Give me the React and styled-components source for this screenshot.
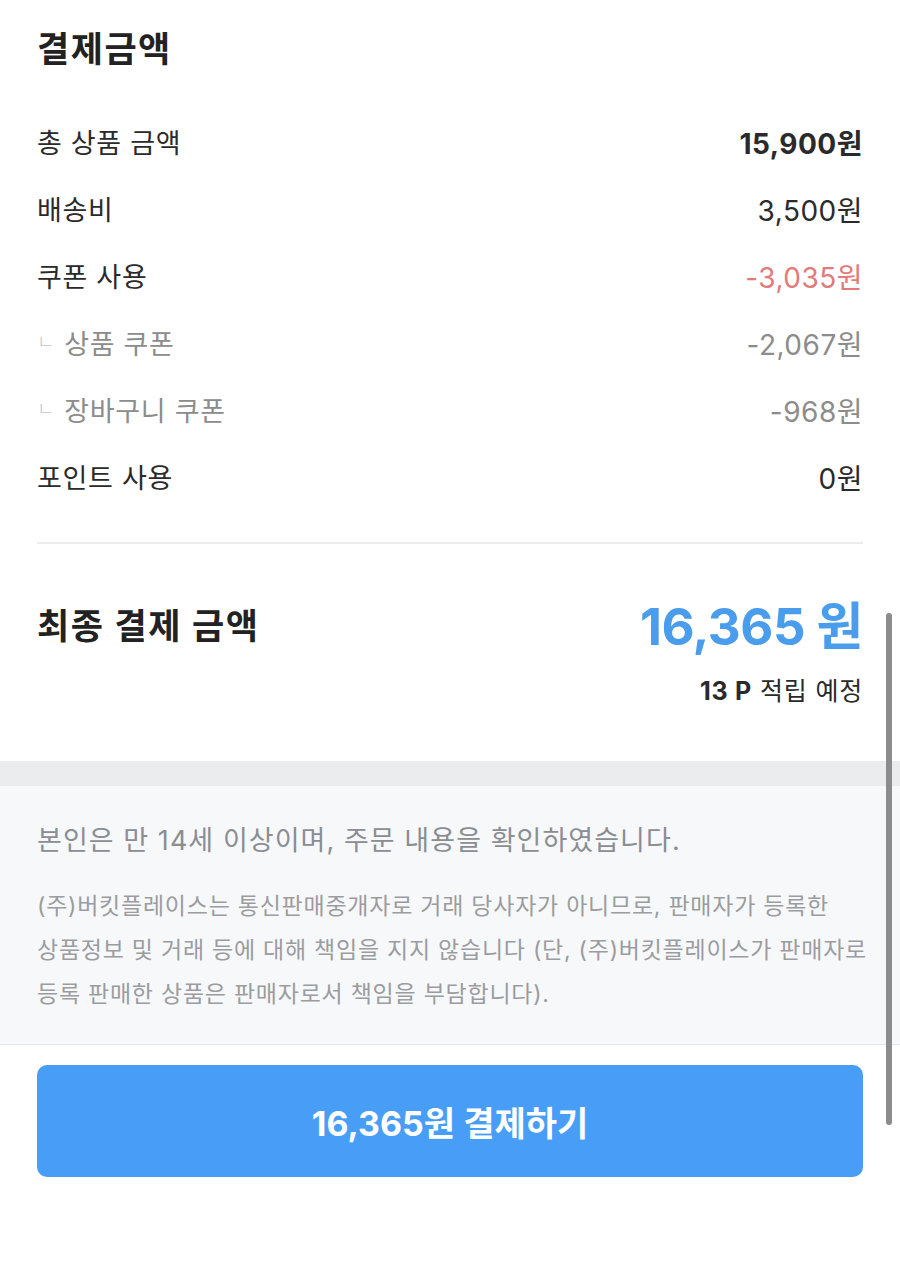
import React from "react";
import styled, { createGlobalStyle } from "styled-components";

const GlobalStyle = createGlobalStyle`
  html, body {
    margin: 0;
    padding: 0;
    background: #fff;
  }
  body {
    font-family: Inter, "Noto Sans CJK KR", sans-serif;
    -webkit-font-smoothing: antialiased;
  }
`;

const Page = styled.div`
  position: relative;
  width: 900px;
  min-height: 1270px;
  background: #fff;
`;

const Summary = styled.section`
  padding: 27px 37px 0 37px;
`;

const Title = styled.h2`
  margin: 0 0 37px;
  font-size: 35px;
  line-height: 44px;
  font-weight: 700;
  color: #222;
  letter-spacing: 1.5px;
`;

const Row = styled.div`
  display: flex;
  align-items: center;
  justify-content: space-between;
  height: 67px;
  font-size: 27px;
`;

const Label = styled.span`
  display: flex;
  align-items: center;
  gap: 9px;
  letter-spacing: 0.7px;
  color: ${(p) => (p.sub ? "#8c8c8c" : "#2a2a2a")};
`;

const Branch = styled.span`
  font-size: 19px;
  color: #c4c4c4;
  font-weight: 300;
  margin-top: -4px;
`;

const Value = styled.span`
  font-size: 28px;
  letter-spacing: 0.5px;
  font-weight: ${(p) => (p.bold ? 700 : 400)};
  color: ${(p) => p.color || "#2a2a2a"};
`;

const Divider = styled.hr`
  margin: 32px 0 0;
  border: 0;
  border-top: 2px solid #ececec;
`;

const TotalRow = styled.div`
  display: flex;
  align-items: center;
  justify-content: space-between;
  margin-top: 43px;
  height: 72px;
`;

const TotalLabel = styled.span`
  font-size: 35px;
  font-weight: 700;
  color: #222;
  letter-spacing: 1.6px;
`;

const TotalValue = styled.span`
  font-size: 51px;
  font-weight: 700;
  color: #4a9cec;
  letter-spacing: -0.5px;
`;

const Points = styled.div`
  text-align: right;
  font-size: 25px;
  line-height: 36px;
  color: #2a2a2a;
  margin-top: 14px;
  letter-spacing: 0.8px;

  b {
    font-weight: 700;
  }
`;

const Band = styled.div`
  height: 25px;
  margin-top: 52px;
  background: #ebecee;
`;

const Notice = styled.section`
  background: #f7f8fa;
  border-bottom: 1px solid #e6e7e9;
  padding: 37px 37px 28px 37px;
`;

const Agree = styled.p`
  margin: 0 0 25px;
  font-size: 27px;
  line-height: 36px;
  color: #8a8d92;
  letter-spacing: 1.05px;
`;

const Disclaimer = styled.p`
  margin: 0;
  font-size: 23px;
  line-height: 44px;
  color: #9a9c9f;
  letter-spacing: 0.75px;
`;

const Line = styled.span`
  display: block;
  white-space: nowrap;
`;

const Footer = styled.div`
  padding: 20px 37px 0;
`;

const PayButton = styled.button`
  display: flex;
  align-items: center;
  justify-content: center;
  width: 100%;
  height: 112px;
  border: 0;
  border-radius: 10px;
  background: #489ef6;
  color: #fff;
  font-family: inherit;
  font-size: 34px;
  font-weight: 700;
  letter-spacing: 0;
  cursor: pointer;
`;

const ScrollThumb = styled.div`
  position: absolute;
  top: 613px;
  right: 8px;
  width: 6px;
  height: 512px;
  border-radius: 3px;
  background: #8c8c8c;
`;

const rows = [
  { label: "총 상품 금액", value: "15,900원", bold: true },
  { label: "배송비", value: "3,500원" },
  { label: "쿠폰 사용", value: "-3,035원", color: "#e27a7a" },
  { label: "상품 쿠폰", value: "-2,067원", sub: true },
  { label: "장바구니 쿠폰", value: "-968원", sub: true },
  { label: "포인트 사용", value: "0원" },
];

const disclaimer = [
  "(주)버킷플레이스는 통신판매중개자로 거래 당사자가 아니므로, 판매자가 등록한",
  "상품정보 및 거래 등에 대해 책임을 지지 않습니다 (단, (주)버킷플레이스가 판매자로",
  "등록 판매한 상품은 판매자로서 책임을 부담합니다).",
];

export default function App() {
  return (
    <Page>
      <GlobalStyle />
      <Summary>
        <Title>결제금액</Title>
        {rows.map((r, i) => (
          <Row key={i}>
            <Label sub={r.sub}>
              {r.sub && <Branch>ㄴ</Branch>}
              {r.label}
            </Label>
            <Value bold={r.bold} color={r.sub ? "#8c8c8c" : r.color}>
              {r.value}
            </Value>
          </Row>
        ))}
        <Divider />
        <TotalRow>
          <TotalLabel>최종 결제 금액</TotalLabel>
          <TotalValue>16,365 원</TotalValue>
        </TotalRow>
        <Points>
          <b>13 P</b> 적립 예정
        </Points>
      </Summary>
      <Band />
      <Notice>
        <Agree>본인은 만 14세 이상이며, 주문 내용을 확인하였습니다.</Agree>
        <Disclaimer>
          {disclaimer.map((t, i) => (
            <Line key={i}>{t}</Line>
          ))}
        </Disclaimer>
      </Notice>
      <Footer>
        <PayButton>16,365원 결제하기</PayButton>
      </Footer>
      <ScrollThumb />
    </Page>
  );
}
